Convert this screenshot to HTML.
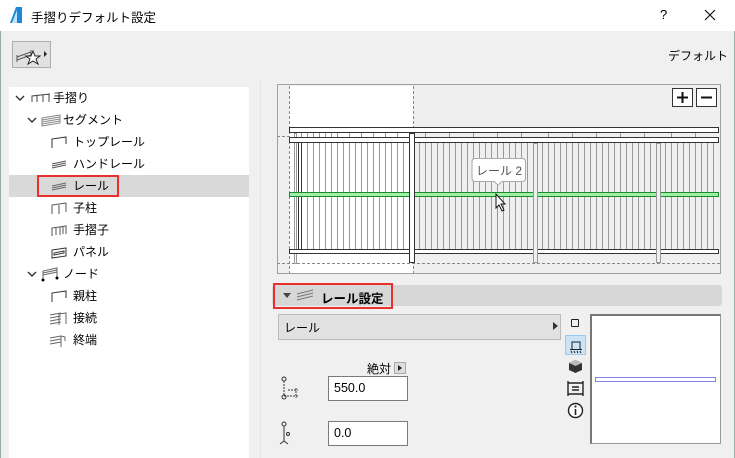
<!DOCTYPE html>
<html><head><meta charset="utf-8"><style>
*{margin:0;padding:0;box-sizing:border-box}
body{width:735px;height:458px;overflow:hidden;background:#f0f0f0;font-family:"Liberation Sans","Noto Sans CJK JP",sans-serif;font-size:12px;color:#000;position:relative}
.a{position:absolute}
.row{position:absolute;left:0;width:240px;height:22px;line-height:22px}
</style></head><body>
<div class="a" style="left:0;top:0;width:735px;height:31px;background:#fff"></div>
<svg class="a" style="left:9px;top:6px" width="14" height="18"><path d="M1 17 L7 1 L13 1 L13 17 Z" fill="#1e88d8"/><path d="M3 17 L8 4 L8 17Z" fill="#bfe4ff"/></svg>
<div class="a" style="left:31px;top:7px;font-size:12.5px">手摺りデフォルト設定</div>
<div class="a" style="left:660px;top:7px;font-size:13px">?</div>
<svg class="a" style="left:704px;top:9px" width="12" height="12"><path d="M1 1 L11 11 M11 1 L1 11" stroke="#111" stroke-width="1.2"/></svg>
<div class="a" style="left:0;top:31px;width:1px;height:427px;background:#9aa"></div>
<div class="a" style="left:734px;top:31px;width:1px;height:427px;background:#9aa"></div>
<div class="a" style="left:12px;top:41px;width:39px;height:27px;border:1px solid #adadad;background:#e1e1e1"></div>
<svg class="a" style="left:14px;top:43px" width="36" height="24"><path d="M3 14 L17 9 M3 17 L17 12 M3 12 L3 19 M17 7 L17 14" stroke="#555" fill="none"/><path d="M19 8 L21 13 L26 13 L22 16 L24 21 L19 18 L14 21 L16 16 L12 13 L17 13Z" fill="#fff" stroke="#222"/><path d="M30 8 L33 11 L30 14Z" fill="#222"/></svg>
<div class="a" style="left:668px;top:47px;font-size:12px">デフォルト</div>
<div class="a" style="left:9px;top:87px;width:240px;height:371px;background:#fff">
<div class="a" style="left:0;top:88px;width:240px;height:22px;background:#d9d9d9"></div>
<div class="a" style="left:28px;top:88px;width:82px;height:22px;border:2px solid #e8302c"></div>
<div class="row" style="top:0"><svg class="a" style="left:6px;top:8px" width="10" height="7"><path d="M1 1 L5 5 L9 1" stroke="#333" stroke-width="1.4" fill="none"/></svg><svg class="a" style="left:22px;top:6px" width="20" height="10"><path d="M1 9 L1 3 L19 1 M6 9 L6 3 M12 9 L12 2 M18 9 L18 1" stroke="#444" fill="none"/></svg><span class="a" style="left:44px">手摺り</span></div>
<div class="row" style="top:22px"><svg class="a" style="left:18px;top:8px" width="10" height="7"><path d="M1 1 L5 5 L9 1" stroke="#333" stroke-width="1.4" fill="none"/></svg><svg class="a" style="left:32px;top:5px" width="20" height="13"><path d="M1 4 L19 1 L19 9 L1 12Z M1 6 L19 3 M1 8 L19 5 M1 10 L19 7" stroke="#888" fill="none"/></svg><span class="a" style="left:54px">セグメント</span></div>
<div class="row" style="top:44px"><svg class="a" style="left:42px;top:5px" width="16" height="13"><path d="M1 12 L1 3 L15 1 L15 8" stroke="#333" fill="none"/></svg><span class="a" style="left:64px">トップレール</span></div>
<div class="row" style="top:66px"><svg class="a" style="left:42px;top:6px" width="16" height="11"><path d="M1 5 L15 2 M1 7 L15 4 M1 9 L15 6" stroke="#555" fill="none"/></svg><span class="a" style="left:64px">ハンドレール</span></div>
<div class="row" style="top:88px"><svg class="a" style="left:42px;top:6px" width="16" height="11"><path d="M1 5 L15 2 M1 7 L15 4 M1 9 L15 6" stroke="#666" fill="none"/></svg><span class="a" style="left:64px">レール</span></div>
<div class="row" style="top:110px"><svg class="a" style="left:42px;top:5px" width="16" height="13"><path d="M1 12 L1 3 L15 1 M8 12 L8 3 M15 1 L15 10" stroke="#555" fill="none"/></svg><span class="a" style="left:64px">子柱</span></div>
<div class="row" style="top:132px"><svg class="a" style="left:42px;top:5px" width="16" height="13"><path d="M1 12 L1 4 L15 2 L15 10 M5 11 L5 4 M9 11 L9 3 M12 10 L12 3" stroke="#555" fill="none"/></svg><span class="a" style="left:64px">手摺子</span></div>
<div class="row" style="top:154px"><svg class="a" style="left:42px;top:5px" width="16" height="13"><path d="M1 12 L1 4 L15 2 L15 10 Z M3 9 L13 7 L13 5 L3 7Z" stroke="#333" fill="none"/></svg><span class="a" style="left:64px">パネル</span></div>
<div class="row" style="top:176px"><svg class="a" style="left:18px;top:8px" width="10" height="7"><path d="M1 1 L5 5 L9 1" stroke="#333" stroke-width="1.4" fill="none"/></svg><svg class="a" style="left:32px;top:4px" width="20" height="15"><path d="M2 13 L2 4 L16 1 L16 10 M2 6 L16 3 M2 8 L16 5" stroke="#666" fill="none"/><circle cx="2" cy="13" r="1.5"/><circle cx="16" cy="11" r="1.5"/></svg><span class="a" style="left:54px">ノード</span></div>
<div class="row" style="top:198px"><svg class="a" style="left:42px;top:5px" width="16" height="13"><path d="M1 12 L1 3 L15 1 L15 8" stroke="#333" fill="none"/></svg><span class="a" style="left:64px">親柱</span></div>
<div class="row" style="top:220px"><svg class="a" style="left:40px;top:4px" width="18" height="15"><path d="M1 4 L12 2 M1 7 L12 5 M1 10 L12 8 M1 13 L12 11 M10 14 L10 3 L17 2 L17 13" stroke="#666" fill="none"/></svg><span class="a" style="left:64px">接続</span></div>
<div class="row" style="top:242px"><svg class="a" style="left:40px;top:4px" width="18" height="15"><path d="M1 5 L12 3 M1 8 L12 6 M1 11 L12 9 M12 14 L12 3 L16 4 L16 8" stroke="#666" fill="none"/></svg><span class="a" style="left:64px">終端</span></div>
</div>
<div class="a" style="left:260px;top:80px;width:1px;height:378px;background:#e3e3e3"></div>
<svg class="a" style="left:277px;top:84px" width="444" height="190" viewBox="277 84 444 190">
<rect x="277.5" y="84.5" width="443" height="189" fill="#efefef" stroke="#a0a0a0"/>
<rect x="289" y="86" width="124" height="187" fill="#fff"/>
<g stroke="#999" stroke-width="1">
<path d="M295.5 143 V249 M301.5 143 V249 M307.5 143 V249 M313.5 143 V249 M319.5 143 V249 M325.5 143 V249 M331.5 143 V249 M337.5 143 V249 M343.5 143 V249 M349.5 143 V249 M355.5 143 V249 M361.5 143 V249 M367.5 143 V249 M373.5 143 V249 M379.5 143 V249 M385.5 143 V249 M391.5 143 V249 M397.5 143 V249 M403.5 143 V249 M419.5 143 V249 M425.5 143 V249 M431.5 143 V249 M437.5 143 V249 M443.5 143 V249 M449.5 143 V249 M455.5 143 V249 M461.5 143 V249 M467.5 143 V249 M473.5 143 V249 M479.5 143 V249 M485.5 143 V249 M491.5 143 V249 M497.5 143 V249 M503.5 143 V249 M509.5 143 V249 M515.5 143 V249 M521.5 143 V249 M527.5 143 V249 M542.5 143 V249 M548.5 143 V249 M554.5 143 V249 M560.5 143 V249 M566.5 143 V249 M572.5 143 V249 M578.5 143 V249 M584.5 143 V249 M590.5 143 V249 M596.5 143 V249 M602.5 143 V249 M608.5 143 V249 M614.5 143 V249 M620.5 143 V249 M626.5 143 V249 M632.5 143 V249 M638.5 143 V249 M644.5 143 V249 M650.5 143 V249 M665.5 143 V249 M671.5 143 V249 M677.5 143 V249 M683.5 143 V249 M689.5 143 V249 M695.5 143 V249 M701.5 143 V249 M707.5 143 V249 M713.5 143 V249"/>
<path d="M295.5 133 V137 M301.5 133 V137 M307.5 133 V137 M313.5 133 V137 M319.5 133 V137 M325.5 133 V137 M331.5 133 V137 M337.5 133 V137 M349.5 133 V137 M361.5 133 V137 M373.5 133 V137 M385.5 133 V137 M397.5 133 V137 M425.5 133 V137 M449.5 133 V137 M473.5 133 V137 M497.5 133 V137 M521.5 133 V137 M548.5 133 V137 M572.5 133 V137 M596.5 133 V137 M620.5 133 V137 M644.5 133 V137 M671.5 133 V137 M695.5 133 V137"/>
</g>
<path d="M298.5 137 V249 M301.5 137 V249" stroke="#333"/>
<path d="M289.5 86 V273 M413.5 86 V273 M277 136.5 H289 M277 263.5 H720" stroke="#888" stroke-dasharray="3,2"/>
<rect x="294.5" y="133.5" width="2" height="130" fill="#fff" stroke="#999"/>
<rect x="289.5" y="127.5" width="429" height="5" fill="#fff" stroke="#333"/>
<rect x="289.5" y="137.5" width="429" height="5" fill="#fff" stroke="#333"/>
<rect x="289.5" y="192.5" width="429" height="4" fill="#9ef0a8" stroke="#1a8a2a"/>
<rect x="289.5" y="249.5" width="429" height="4" fill="#fff" stroke="#333"/>
<rect x="409.5" y="133.5" width="5" height="129" fill="#fff" stroke="#333"/>
<rect x="533.5" y="143.5" width="4" height="119" fill="#efefef" stroke="#999"/>
<rect x="656.5" y="143.5" width="4" height="119" fill="#efefef" stroke="#999"/>
<rect x="672.5" y="88.5" width="20" height="18" fill="#fff" stroke="#333"/>
<rect x="696.5" y="88.5" width="20" height="18" fill="#fff" stroke="#333"/>
<path d="M677 97.5 H688 M682.5 92 V103 M701 97.5 H712" stroke="#111" stroke-width="2"/>
<path d="M475.5 158.5 H522 Q525.5 158.5 525.5 162 V178 Q525.5 181.5 522 181.5 H502 L498 185 L494 181.5 H475.5 Q472 181.5 472 178 V162 Q472 158.5 475.5 158.5Z" fill="#fff" stroke="#aaa"/>
<text x="476" y="175" font-size="12" fill="#555" font-family="Liberation Sans,Noto Sans CJK JP,sans-serif">レール 2</text>
<path d="M496 194 V208 L499 205 L502 211 L504 210 L501 204 L505 204 Z" fill="#fff" stroke="#111"/>
</svg>
<div class="a" style="left:272px;top:285px;width:450px;height:21px;background:#d7d7d7;border-radius:3px"></div>
<div class="a" style="left:273px;top:283px;width:120px;height:26px;border:2px solid #e8302c"></div>
<div class="a" style="left:283px;top:293px;width:0;height:0;border-left:4px solid transparent;border-right:4px solid transparent;border-top:5px solid #444"></div>
<svg class="a" style="left:296px;top:288px" width="18" height="14"><path d="M1 6 L17 2 M1 9 L17 5 M1 12 L17 8" stroke="#777" fill="none"/></svg>
<div class="a" style="left:321px;top:288px;font-weight:bold;font-size:12.5px">レール設定</div>
<div class="a" style="left:278px;top:314px;width:283px;height:26px;background:#e1e1e1;border:1px solid #bbb"></div>
<div class="a" style="left:284px;top:319px">レール</div>
<div class="a" style="left:553px;top:322px;border-top:4px solid transparent;border-bottom:4px solid transparent;border-left:5px solid #333"></div>
<div class="a" style="left:571px;top:319px;width:8px;height:8px;border:1.3px solid #222;border-radius:1px"></div>
<div class="a" style="left:565px;top:335px;width:21px;height:20px;background:#cce4f7;border:1px solid #99c9ef"></div>
<svg class="a" style="left:566px;top:336px" width="20" height="19"><path d="M6 13 V6 H14 V13 M4 13.5 H16 M5 15 L6 17 M8 15 L9 17 M11 15 L12 17 M14 15 L15 17" stroke="#222" fill="none"/></svg>
<svg class="a" style="left:567px;top:358px" width="17" height="17"><path d="M8.5 2 L15 5 L15 12 L8.5 15 L2 12 L2 5Z" fill="#333"/><path d="M8.5 2 L15 5 L8.5 8 L2 5Z" fill="#bbb"/></svg>
<svg class="a" style="left:566px;top:380px" width="19" height="17"><path d="M2 1 V16 M17 1 V16 M2 3 H17 M2 14 H17 M6 7 H13 M6 10 H13" stroke="#222" stroke-width="1.4" fill="none"/></svg>
<svg class="a" style="left:567px;top:402px" width="17" height="17"><circle cx="8.5" cy="8.5" r="7" fill="#fff" stroke="#222" stroke-width="1.4"/><path d="M8.5 7 V13" stroke="#222" stroke-width="1.6"/><circle cx="8.5" cy="4.5" r="1.1" fill="#222"/></svg>
<div class="a" style="left:590px;top:314px;width:131px;height:130px;background:#fff;border:1px solid #999;border-left:2px solid #777;border-top:2px solid #777"></div>
<div class="a" style="left:595px;top:377px;width:121px;height:5px;border:1px solid #8080f0"></div>
<div class="a" style="left:367px;top:360px">絶対</div>
<div class="a" style="left:394px;top:362px;width:12px;height:12px;background:#ddd;border:1px solid #aaa"></div>
<div class="a" style="left:398px;top:365px;border-top:3px solid transparent;border-bottom:3px solid transparent;border-left:4px solid #222"></div>
<svg class="a" style="left:278px;top:376px" width="24" height="26"><circle cx="6" cy="3" r="2" fill="none" stroke="#333"/><path d="M6 5 V20 H20 M10 14 H20 M18 12 V22" stroke="#333" fill="none" stroke-dasharray="2,1"/><circle cx="6" cy="21" r="2" fill="none" stroke="#333"/></svg>
<div class="a" style="left:328px;top:376px;width:80px;height:25px;background:#fff;border:1px solid #7a7a7a;padding:4px 0 0 5px;font-size:12.5px">550.0</div>
<svg class="a" style="left:278px;top:421px" width="20" height="26"><circle cx="6" cy="3" r="2" fill="none" stroke="#333"/><path d="M6 5 V20 M2 23 L6 20 L10 23" stroke="#333" fill="none"/><circle cx="10" cy="13" r="1.5" fill="none" stroke="#333"/></svg>
<div class="a" style="left:328px;top:421px;width:80px;height:25px;background:#fff;border:1px solid #7a7a7a;padding:4px 0 0 5px;font-size:12.5px">0.0</div>
</body></html>
